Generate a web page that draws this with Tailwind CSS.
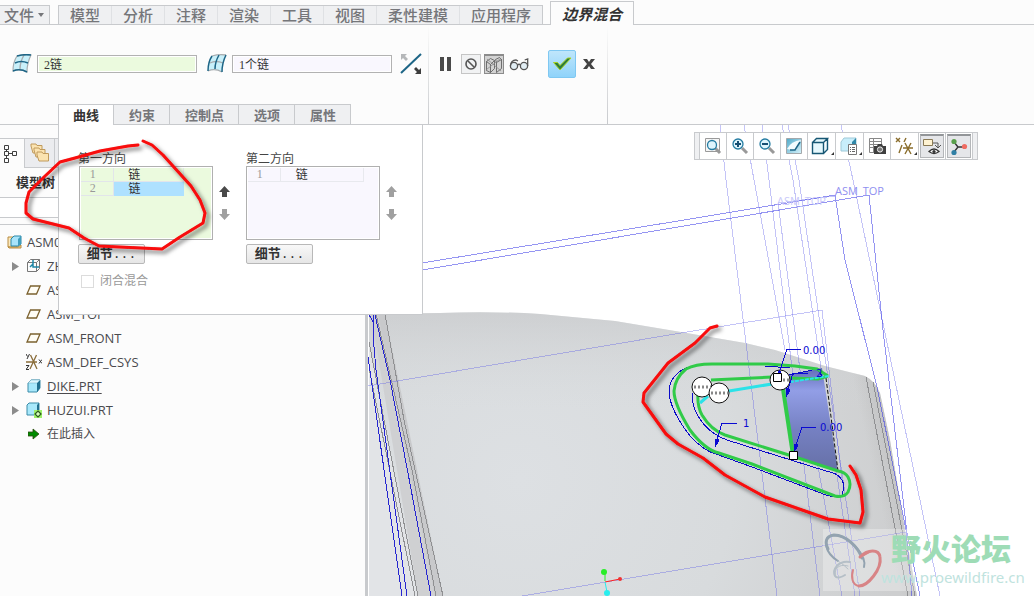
<!DOCTYPE html>
<html lang="zh-CN">
<head>
<meta charset="utf-8">
<meta name="viewport" content="width=device-width, initial-scale=1">
<title>边界混合</title>
<script src="https://cdn.jsdelivr.net/npm/@tailwindcss/browser@4"></script>
</head>
<body class="relative flex min-h-screen flex-col overflow-x-hidden bg-[#fcfcfc] font-['Open_Sans','Noto_Sans_CJK_SC',sans-serif] text-xs text-[#444]">

<!-- Ribbon tabs -->
<nav class="flex h-[25px] shrink-0 items-end border-b border-[#c8cacd] text-[15px] font-medium leading-[18px] text-[#75767a]">
  <button class="-mb-px flex h-5 w-[50px] items-center gap-1 border border-l-0 border-[#c8cacd] bg-[#eff0f2] pl-1">文件
    <svg class="h-1 w-[6px]" viewBox="0 0 6 4"><path d="M0 0h6L3 4z" fill="#75767a"/></svg></button>
  <div class="-mb-px ml-2 flex h-5 divide-x divide-[#dfe1e4] border border-[#c8cacd] bg-[#eff0f2]">
    <button class="px-[11px]">模型</button><button class="px-[11px]">分析</button><button class="px-[11px]">注释</button><button class="px-[11px]">渲染</button><button class="px-[11px]">工具</button><button class="px-[11px]">视图</button><button class="px-[11px]">柔性建模</button><button class="px-[11px]">应用程序</button>
  </div>
  <button class="-mb-px ml-[7px] h-6 border border-b-0 border-[#c8cacd] bg-[#fcfcfc] px-[11px] font-bold italic text-[#333]">边界混合</button>
</nav>

<!-- Dashboard -->
<header class="relative flex h-[100px] shrink-0 border-b border-[#c8cacd]">
  <div class="flex w-[428px] shrink-0 items-start pl-3 pt-[25px]">
    <div class="flex h-7 items-center">
      <svg class="h-5 w-5" viewBox="0 0 20 20"><path d="M5 2Q12 0 19 1Q15 9 15 18Q8 14 1 17Q1 8 5 2z" fill="#c9f0fa" stroke="#a8adb0" stroke-width="1.2"/><path d="M12 1Q8 8 8 15" fill="none" stroke="#a8adb0" stroke-width="1.4"/><path d="M5 2Q12 0 19 1M3 9Q9 6 16 9M1 17Q8 14 15 18" fill="none" stroke="#1d6586" stroke-width="1.5"/></svg>
      <input aria-label="第一方向链" value="2链" class="ml-[5px] h-[18px] w-40 border border-[#b2b2b2] bg-[#ebfade] px-[6px] font-['Liberation_Serif','Noto_Sans_CJK_SC',serif] text-xs text-[#333] outline outline-1 -outline-offset-2 outline-white">
      <svg class="ml-[10px] h-5 w-5" viewBox="0 0 20 20"><path d="M5 2Q12 0 19 1Q15 9 15 18Q8 14 1 17Q1 8 5 2z" fill="#c9f0fa"/><path d="M5 2Q12 0 19 1M3 9Q9 6 16 9M1 17Q8 14 15 18" fill="none" stroke="#a8adb0" stroke-width="1.3"/><path d="M5 2Q1 8 1 17M12 1Q8 8 8 15M19 1Q15 9 15 18" fill="none" stroke="#1d6586" stroke-width="1.5"/></svg>
      <input aria-label="第二方向链" value="1个链" class="ml-[5px] h-[18px] w-40 border border-[#b2b2b2] bg-[#f9f7fe] px-[6px] font-['Liberation_Serif','Noto_Sans_CJK_SC',serif] text-xs text-[#333] outline outline-1 -outline-offset-2 outline-white">
      <button aria-label="反向" class="ml-2"><svg class="h-[22px] w-[22px]" viewBox="0 0 22 22"><path d="M1 20L21 1" stroke="#1d6586" stroke-width="2"/><path d="M1 1h6l-2 2 3 3-2 2-3-3-2 2z" fill="#b5b7b9"/><path d="M21 21h-6l2-2-3-3 2-2 3 3 2-2z" fill="#3d3d3d"/></svg></button>
    </div>
  </div>
  <div class="w-px bg-linear-to-b from-transparent to-[#c8cacd]"></div>
  <div class="flex w-[178px] shrink-0 items-start pl-[11px] pt-[25px]">
    <div class="flex h-7 items-center">
      <button aria-label="暂停"><svg class="h-[14px] w-3" viewBox="0 0 12 14"><path d="M0 0h4v14H0zM7 0h4v14H7z" fill="#4a4a4a"/></svg></button>
      <button aria-label="无预览" class="ml-[9px] flex h-5 w-5 items-center justify-center border border-[#c5c5c5] bg-[#f1f2f3]"><svg class="h-3 w-3" viewBox="0 0 12 12"><circle cx="6" cy="6" r="5" fill="none" stroke="#555" stroke-width="1.6"/><path d="M3 3l6 6" stroke="#555" stroke-width="1.6"/></svg></button>
      <button aria-label="分离" class="ml-[3px] flex h-5 w-5 items-center justify-center border border-t-2 border-[#8c8c8c] bg-[#d3d3d3]"><svg class="h-[18px] w-[18px]" viewBox="0 0 18 18" fill="none" stroke="#555" stroke-width=".8"><path d="M1.500 5.500v9l4 2v-8zM1.500 5.500l4-3 4 2-4 4M5.500 16.500l4-4v-8M11.500 6.500v10l5-4v-9zM11.500 6.500l-1-3 4-2 2 2"/><path d="M1.500 13.500L15.500 2.500M2 3l14 12" stroke="#8a8a8a"/></svg></button>
      <button aria-label="预览" class="ml-[5px]"><svg class="h-[14px] w-[21px]" viewBox="0 0 21 14" fill="none" stroke="#555" stroke-width="1.3"><circle cx="5" cy="9" r="3.6" fill="#e2eef4"/><circle cx="15" cy="9" r="3.6" fill="#e2eef4"/><path d="M8.500 8q1.500-1.500 3 0M1.400 9Q2 3 7 3l2 1M18.700 9V2l-3 1"/></svg></button>
      <button aria-label="确定" class="ml-[18px] flex h-7 w-7 items-center justify-center rounded-xs border border-[#7fc8f2] bg-linear-to-b from-[#bfe6fb] to-[#8fd3fa]"><svg class="h-[14px] w-5" viewBox="0 0 20 14"><path d="M1.500 5.500h4l2.500 3L15.500 1H19L8 13z" fill="#2c7c3c" stroke="#a9d322" stroke-width="1"/></svg></button>
      <button aria-label="取消" class="ml-[7px]"><svg class="h-3 w-3" viewBox="0 0 12 12"><path d="M0 1h4l2 3 2-3h4L8 6l4 5H8L6 8l-2 3H0l4-5z" fill="#444"/></svg></button>
    </div>
  </div>
  <div class="w-px bg-linear-to-b from-transparent to-[#c8cacd]"></div>

  <div class="absolute -bottom-px left-[58px] flex h-[21px] text-[13px] font-bold leading-[18px] text-[#75767a]">
    <button class="border border-b-0 border-[#c8cacd] bg-white px-[14px] text-[#333]">曲线</button>
    <button class="border border-l-0 border-[#c8cacd] bg-[#eff0f2] pl-[15px] pr-[14px]">约束</button>
    <button class="border border-l-0 border-[#c8cacd] bg-[#eff0f2] pl-[15px] pr-[14px]">控制点</button>
    <button class="border border-l-0 border-[#c8cacd] bg-[#eff0f2] pl-[15px] pr-[14px]">选项</button>
    <button class="border border-l-0 border-[#c8cacd] bg-[#eff0f2] pl-[15px] pr-[14px]">属性</button>
  </div>
</header>

<main class="relative flex flex-1">

  <!-- Model tree -->
  <aside class="w-[365px] shrink-0 pt-[13px]">
    <div class="flex h-[30px]">
      <button aria-label="模型树" class="w-6 border-t border-[#c8cacd] pl-[3px]"><svg class="h-5 w-[15px]" viewBox="0 0 15 20" fill="none" stroke="#3f3f3f"><path d="M1.500 1.500h4v4h-4zM1.500 7.500h4v4h-4zM1.500 14.500h4v4h-4zM9.500 7.500h4v4h-4zM3.500 5.500v2M3.500 11.500v3M5.500 9.500h4"/></svg></button>
      <button aria-label="文件夹浏览器" class="flex w-[31px] items-center justify-center border border-[#c8cacd] bg-[#ebecef]"><svg class="h-5 w-5" viewBox="0 0 20 20" fill="#fbe3b0" stroke="#c09a5c"><path d="M1 3V1h5l1 1.500h5V10H3z"/><path d="M4 7V5h5l1 1.500h5V14H6z"/><path d="M7 12V9h5l1 1.500h5.500V18H9z"/></svg></button>
      <div class="flex-1 border-b border-t border-[#c8cacd] bg-[#ebecef]"></div>
    </div>
    <h2 class="pl-4 pt-1 text-[13px] font-bold leading-5 text-[#333]">模型树</h2>
    <input aria-label="搜索" class="mt-[5px] block h-[21px] w-full border border-l-0 border-[#c8cacd] bg-white">
    <div class="mt-[6px] border-t border-[#c8cacd]"></div>
    <ul class="pt-[5px] text-[13px] leading-6 text-[#4a4a4e]">
      <li class="flex h-6 items-center gap-[5px] pl-[7px]"><svg class="h-[15px] w-[15px]" viewBox="0 0 15 15"><path d="M1 2h9v10H1z" fill="#fbe9bd" stroke="#b98c40"/><path d="M1 12h10l3-2v3H2z" fill="#f1d48f" stroke="#b98c40"/><path d="M4 4l3-3h7v8l-3 2H4z" fill="#a8e4fa" stroke="#2a87a8"/><path d="M11 4v7l3-2V1z" fill="#3f9dbd"/></svg>ASM0</li>
      <li class="flex h-6 items-center pl-3"><svg class="h-[9px] w-[7px]" viewBox="0 0 7 9"><path d="M0 0l7 4.500L0 9z" fill="#8c8c8c"/></svg><svg class="ml-2 h-[14px] w-[14px]" viewBox="0 0 14 14" fill="none" stroke="#777"><path d="M.500 3.500h9v9h-9zM.500 3.500l3-3h9l-3 3M12.500.500v9l-3 3"/><path d="M6 1v7h6M6 5L3 8" stroke="#1d86a6" stroke-width="1.500"/></svg><span class="ml-[6px]">ZH</span></li>
      <li class="flex h-6 items-center gap-[6px] pl-[26px]"><svg class="h-[10px] w-[15px]" viewBox="0 0 15 10"><path d="M4.500 1H14L10.500 9H1z" fill="#fffdf5" stroke="#7b612f" stroke-width="1.300"/></svg>AS</li>
      <li class="flex h-6 items-center gap-[6px] pl-[26px]"><svg class="h-[10px] w-[15px]" viewBox="0 0 15 10"><path d="M4.500 1H14L10.500 9H1z" fill="#fffdf5" stroke="#7b612f" stroke-width="1.300"/></svg>ASM_TOP</li>
      <li class="flex h-6 items-center gap-[6px] pl-[26px]"><svg class="h-[10px] w-[15px]" viewBox="0 0 15 10"><path d="M4.500 1H14L10.500 9H1z" fill="#fffdf5" stroke="#7b612f" stroke-width="1.300"/></svg>ASM_FRONT</li>
      <li class="flex h-6 items-center gap-[5px] pl-[26px]"><svg class="h-4 w-4" viewBox="0 0 16 16" fill="none"><path d="M0 8h11M4.500 1L11 15M10.500 1L4 15" stroke="#8a6d3a" stroke-width="1.300"/><path d="M0 0l1.500 2.500M3.500 0L1 5M13 5.500l3 4M16 5.500l-3 4M0 11.500h3L0 15.500h3" stroke="#333"/></svg>ASM_DEF_CSYS</li>
      <li class="flex h-6 items-center pl-3"><svg class="h-[9px] w-[7px]" viewBox="0 0 7 9"><path d="M0 0l7 4.500L0 9z" fill="#8c8c8c"/></svg><svg class="ml-2 h-[14px] w-[14px]" viewBox="0 0 14 14"><path d="M1 4l3-3h9v8l-3 4H1z" fill="#a8e8fb" stroke="#3a8ba8"/><path d="M10 4l3-3v8l-3 4z" fill="#216f8e"/><path d="M1 4l3-3h9l-3 3z" fill="#dff7fe" stroke="#6ca9be" stroke-width=".5"/></svg><a href="#" class="ml-[6px] leading-4 underline underline-offset-2">DIKE.PRT</a></li>
      <li class="flex h-6 items-center pl-3"><svg class="h-[9px] w-[7px]" viewBox="0 0 7 9"><path d="M0 0l7 4.500L0 9z" fill="#8c8c8c"/></svg><svg class="ml-[7px] h-4 w-4" viewBox="0 0 16 16"><path d="M1 3l2-2h10v9l-2 3H1z" fill="#a8e8fb" stroke="#3a8ba8"/><path d="M11 3l2-2v9l-2 2z" fill="#216f8e"/><path d="M8 8h8v8H8z" fill="#9df26a"/><path d="M12 9l3 3-3 3-3-3z" fill="#d8ffc0" stroke="#2c5a1c" stroke-width="1.200"/></svg><span class="ml-[5px]">HUZUI.PRT</span></li>
      <li class="flex h-6 items-center gap-[8px] pl-7 text-xs leading-6"><svg class="h-3 w-[11px]" viewBox="0 0 11 12"><path d="M0 4h5V1l6 5-6 5V8H0z" fill="#008a00" stroke="#2d4a10" stroke-width=".8"/></svg>在此插入</li>
    </ul>
  </aside>
  <div class="w-[3px] shrink-0 bg-[#c8cacd]"></div>

  <!-- Graphics window -->
  <section aria-label="图形窗口" class="relative min-h-[471px] flex-1 overflow-hidden bg-white">
    <svg class="absolute inset-0 h-full w-full" viewBox="368 125 666 471" preserveAspectRatio="xMinYMin slice" fill="none">
      <defs>
        <radialGradient id="body" gradientUnits="userSpaceOnUse" cx="520" cy="480" r="390"><stop offset="0" stop-color="#dde0e3"/><stop offset=".55" stop-color="#d8dbdd"/><stop offset="1" stop-color="#cdcecf"/></radialGradient>
        <linearGradient id="top" x1="0" y1="0" x2="0" y2="1"><stop offset="0" stop-color="#c6c7c9" stop-opacity=".6"/><stop offset="1" stop-color="#d6d9db" stop-opacity="0"/></linearGradient>
        <linearGradient id="edge" gradientUnits="userSpaceOnUse" x1="866" y1="440" x2="898" y2="433"><stop offset="0" stop-color="#bbb" stop-opacity="0"/><stop offset="1" stop-color="#b4b5b7"/></linearGradient>
        <linearGradient id="patch" x1="0" y1="0" x2="0" y2="1"><stop offset="0" stop-color="#626bb8"/><stop offset=".22" stop-color="#929ee6"/><stop offset=".6" stop-color="#7580c2"/><stop offset="1" stop-color="#6670a6"/></linearGradient>
      </defs>
      <path d="M369 314L440 313Q490 311 540 314L615 321 675 331 745 343 775 350 825 366 865 376Q875 381 880 393L890 440 905 530 917 596H369z" fill="url(#body)"/>
      <path d="M369 314L440 313Q490 311 540 314L615 321 675 331 745 343 775 350 825 366 865 376L870 410H369z" fill="url(#top)"/>
      <path d="M850 372L865 376Q875 381 880 393L890 440 905 530 917 596H890z" fill="url(#edge)" opacity=".7"/>
      <path d="M369 342L418 596H369z" fill="#e2e4e7"/>
      <path d="M371 314h12L443 596H418z" fill="#cfd0d2"/>
      <path d="M378 314h7L443 596h-8z" fill="#c8c9cb"/>
      <g stroke="#8f9092" shape-rendering="crispEdges"><path d="M385 314L404 420 443 596M369 342L418 596M376 314L412 470 436 596M369 368L415 596"/><path d="M866 377L908 596M873 382L915 596"/></g>
      <g stroke="#2626d0" shape-rendering="crispEdges"><path d="M368 357L402 596M369 315l5 8M373 315V335L376 370 407 596M375 315L390 380 408 473 431 596"/></g>

      <g stroke="#5555e8" stroke-opacity=".35" shape-rendering="crispEdges">
        <path d="M720 125L726 180 777 596M744 125L785 350M762 125L769 180 820 596M782 125L793 180 855 596M788 125L799 180 860 596M841 125L853 180 940 596M778 203L800 370 842 596M778 203L835 196"/>
        <path d="M368 386L675 334 822 310 842 480M522 596L906 532"/>
      </g>
      <g stroke="#3434e6" stroke-opacity=".52" shape-rendering="crispEdges"><path d="M422 263L690 219 835 195 845 260 877 387 906 530 912 596M422 270L690 225 869 195 883 330 907 533 920 596"/></g>
      <g font-family="Open Sans" font-size="11"><text x="835" y="195" fill="#8f8ff0">ASM_TOP</text><text x="777" y="205" fill="#c9c9fa">ASM_TOP</text></g>

      <path d="M785 376L822 368 838 471 793 456 783 390z" fill="url(#patch)"/>
      <path d="M826 378L838 471" stroke="#111" stroke-dasharray="4 2"/>
      <g stroke="#0a0ac8" shape-rendering="crispEdges"><path d="M688 367Q669 375 669 392 670 410 690 436 704 451 716 454L752 467 826 495Q838 499 842 495 845 485 842 480 838 473 826 471L727 440Q706 432 697 414 691 403 693 393M765 366L790 368M700 364h70M789 375l28-6 5 7"/></g>
      <path d="M828 376L817 369 795 366 768 364H712Q695 364 686 369 675 378 674 391 674 404 690 430 705 450 719 453L752 464 835 496Q844 498 848 492 852 484 848 477 845 472 838 471L792 456 725 435Q711 430 702 415 697 406 698 393M711 380L772 377M790 378L818 379 828 376" stroke="#30cb48" stroke-width="3"/>
      <path d="M783 389L793 455" stroke="#30cb48" stroke-width="4"/>
      <path d="M700 403L708 396M729 391L772 384" stroke="#2be2e8" stroke-width="3"/><path d="M790 382L829 376" stroke="#2be2e8" stroke-width="2" stroke-dasharray="4 1"/>
      <g fill="#fff" stroke="#111"><circle cx="702" cy="387" r="10"/><circle cx="719" cy="393" r="10"/><circle cx="780" cy="380" r="10"/></g>
      <g stroke="#888" stroke-width="3" stroke-dasharray="2 2"><path d="M694 387h17M711 393h17M783 380h8"/></g>
      <g stroke="#0a0ad2" shape-rendering="crispEdges"><path d="M778 376L787 349H801M787 393L793 373H808M716 443L722 423H737M795 448L802 427H816"/><path d="M778 377l1-6 2 1zM786 397l0-9 4 2zM715 447l0-8 4 1zM794 452l1-8 3 1z" fill="#0a0ad2"/></g>
      <g fill="#fff" stroke="#000"><path d="M773.500 373.500h8v8h-8zM789.500 451.500h8v8h-8z"/></g>
      <g font-family="DejaVu Sans" font-size="10" fill="#0a0ad2"><text x="803" y="354">0.00</text><text x="820" y="431">0.00</text><text x="743" y="427">1</text><text x="816" y="377">2</text></g>

      <path d="M605 581V572" stroke="#27ee27"/><path d="M605 582l15-3" stroke="#f22"/><path d="M605 582l2 10" stroke="#27eeee"/>
      <circle cx="604" cy="572" r="3" fill="#27ee27"/><circle cx="620" cy="579" r="2" fill="#e33"/><circle cx="607" cy="593" r="3" fill="#27eeee"/>

      <!-- Forum watermark -->
      <path d="M823 529h84l10 62h-94z" fill="#fff" fill-opacity=".3"/>
      <g stroke-linecap="round">
        <path d="M864 567C867 556 849 535 834 535 821 537 825 553 838 561" stroke="#93a3b0" stroke-width="2"/>
        <path d="M862 558C858 547 846 535 834 535 825 536 825 543 828 549" stroke="#93a3b0" stroke-width="3"/>
        <path d="M850 562C838 560 832 570 835 576 837 579 842 577 845 575" stroke="#b5bfc7" stroke-width="2"/>
        <path d="M836 577C833 570 838 563 848 566M838 561Q843 564 848 569" stroke="#b5bfc7"/>
        <path d="M860 557C868 549 879 549 880 557 882 569 868 586 859 586" stroke="#d88486" stroke-width="3"/>
        <path d="M860 557L871 551M859 586C852 585 851 577 853 570" stroke="#d88486" stroke-width="2"/>
      </g>
      <text x="891" y="560" font-family="Noto Sans CJK SC" font-weight="900" font-size="30" fill="#9edcb6">野火论坛</text>
      <text x="881" y="583" font-family="Noto Sans" font-size="15" fill="#bfe3de">www.proewildfire.cn</text>
    </svg>

    <div class="relative flex justify-end pr-14 pt-[7px]">
      <div class="flex h-7 divide-x divide-[#c8cacd] border border-[#c8cacd] bg-white">
        <div class="w-[5px] bg-[#eff0f2]"></div>
        <button aria-label="重新调整" class="flex w-[27px] items-center justify-center"><svg class="h-[18px] w-[18px]" viewBox="0 0 18 18"><path d="M1.500 1.500h14v13h-14z" fill="#f6f6f6" stroke="#9a9a9a"/><path d="M11 11l5 5" stroke="#999" stroke-width="3"/><circle cx="8" cy="8" r="4.500" fill="#dff5fd" stroke="#247ca2" stroke-width="1.300"/></svg></button>
        <button aria-label="放大" class="flex w-[27px] items-center justify-center"><svg class="h-[18px] w-[18px]" viewBox="0 0 18 18"><path d="M11 11l5 5" stroke="#999" stroke-width="3"/><circle cx="7" cy="7" r="5" fill="#dff5fd" stroke="#247ca2" stroke-width="1.300"/><path d="M4 7h6M7 4v6" stroke="#164f73" stroke-width="2"/></svg></button>
        <button aria-label="缩小" class="flex w-[27px] items-center justify-center"><svg class="h-[18px] w-[18px]" viewBox="0 0 18 18"><path d="M11 11l5 5" stroke="#999" stroke-width="3"/><circle cx="7" cy="7" r="5" fill="#dff5fd" stroke="#247ca2" stroke-width="1.300"/><path d="M4 7h6" stroke="#164f73" stroke-width="2"/></svg></button>
        <button aria-label="重画" class="flex w-[27px] items-center justify-center"><svg class="h-[18px] w-[18px]" viewBox="0 0 18 18"><defs><linearGradient id="sh" x1="0" y1="0" x2="1" y2="1"><stop offset="0" stop-color="#4fa9c8"/><stop offset="1" stop-color="#d9f3fb"/></linearGradient></defs><path d="M1.500 1.500h15v15h-15z" fill="url(#sh)" stroke="#a3a8ab"/><path d="M2 12Q6 4 16 3L11 13H7z" fill="#f2fbfe"/><path d="M5 13h5l5-8" fill="none" stroke="#1d6586" stroke-width="1.500"/></svg></button>
        <button aria-label="显示样式" class="relative flex w-7 items-center justify-center"><svg class="mr-1 h-[18px] w-[18px]" viewBox="0 0 18 18" fill="#e6f8fd" stroke="#175774" stroke-width="1.400"><path d="M1.500 5.500h11v11h-11zM1.500 5.500l4-4h11l-4 4M16.500 1.500v11l-4 4"/></svg><svg class="absolute bottom-1 right-px h-[3px] w-[3px]" viewBox="0 0 4 4"><path d="M4 0v4H0z" fill="#333"/></svg></button>
        <button aria-label="已保存方向" class="relative flex w-7 items-center justify-center"><svg class="mr-px h-[18px] w-[18px]" viewBox="0 0 18 18"><path d="M1 5l3-4h12v8l-3 5H1z" fill="#c8eefb" stroke="#9fc9d8"/><path d="M12 5l4-4v8l-4 4z" fill="#2f88a8"/><path d="M8.500 7.500h8v10h-8z" fill="#fff" stroke="#777"/><path d="M10 10.500h1m1 0h3M10 12.500h1m1 0h3M10 14.500h1m1 0h3" stroke="#666"/></svg><svg class="absolute bottom-1 right-px h-[3px] w-[3px]" viewBox="0 0 4 4"><path d="M4 0v4H0z" fill="#333"/></svg></button>
        <button aria-label="视图管理器" class="flex w-[27px] items-center justify-center"><svg class="h-[18px] w-[18px]" viewBox="0 0 18 18"><path d="M1.500 1.500h12v14h-12zM1.500 4.500h12M1.500 7.500h12M1.500 10.500h12M5.500 1.500v14" fill="#fff" stroke="#888"/><path d="M6 9h3l1-2h4l1 2h3v8H6z" fill="#3f3f3f"/><circle cx="12" cy="12.500" r="2.600" fill="#777" stroke="#eee"/></svg></button>
        <button aria-label="基准显示" class="relative flex w-7 items-center justify-center"><svg class="mr-px h-[18px] w-[18px]" viewBox="0 0 18 18" stroke="#8a6d2c" stroke-width="1.400"><path d="M1 1l4 4M5 1L1 5M11 1L9 5M7 8l-3 8M8 11h10M10 6l6 11M16 6l-6 11"/></svg><svg class="absolute bottom-1 right-px h-[3px] w-[3px]" viewBox="0 0 4 4"><path d="M4 0v4H0z" fill="#333"/></svg></button>
        <button aria-label="注释显示" aria-pressed="true" class="flex w-[27px] items-center justify-center bg-white p-px"><span class="flex h-full w-full items-center justify-center border border-t-2 border-[#b4b6b9] border-t-[#929598] bg-[#e5e6e9]"><svg class="h-[18px] w-[18px]" viewBox="0 0 18 18"><path d="M.500 1.500h9v6h-9z" fill="#fff3d2" stroke="#8a7a55"/><path d="M10 5h5v4M12 7l3 3 3-3" fill="none" stroke="#555"/><path d="M6 13.500q5-5 10 0-5 4-10 0z" fill="#fff" stroke="#333" stroke-width="1.300"/><circle cx="11" cy="13.500" r="1.600" fill="#333"/></svg></span></button>
        <button aria-label="旋转中心" aria-pressed="true" class="flex w-[27px] items-center justify-center bg-white p-px"><span class="flex h-full w-full items-center justify-center border border-t-2 border-[#b4b6b9] border-t-[#929598] bg-[#e5e6e9]"><svg class="h-[18px] w-[18px]" viewBox="0 0 18 18"><path d="M4 4l4 5-4 5M8 9h6" fill="none" stroke="#333" stroke-width="1.400"/><circle cx="4" cy="3.500" r="2.600" fill="#5aa04c"/><circle cx="14.500" cy="8.500" r="2.600" fill="#ee6b62"/><circle cx="4" cy="14.500" r="2.600" fill="#2f7fa5"/></svg></span></button>
        <div class="w-1 bg-[#eff0f2]"></div>
      </div>
    </div>
  </section>

  <!-- Curves slide-down panel -->
  <section aria-label="曲线" class="absolute left-[58px] top-0 h-[190px] w-[365px] border border-t-0 border-[#c8cacd] bg-white pl-[19px] pt-[27px] text-xs">
    <div class="flex">
      <div class="w-[168px]">
        <h3 class="leading-[14px]">第一方向</h3>
        <div class="ml-px flex items-center">
          <div class="h-[74px] w-[134px] border border-[#b0b0b0] bg-[#ebfade] p-px outline outline-1 -outline-offset-2 outline-white">
            <table class="w-[103px] table-fixed border-collapse text-center leading-[13px] text-[#333]">
              <tr><td class="w-8 border-b border-r border-[#e2e5ea] p-0 pr-2 font-['Liberation_Serif',serif] text-[#999]">1</td><td class="border-b border-r border-[#e2e5ea] p-0 pr-7">链</td></tr>
              <tr><td class="border-b border-r border-[#e2e5ea] p-0 pr-2 font-['Liberation_Serif',serif] text-[#999]">2</td><td class="bg-[#aee1ff] p-0 pr-7">链</td></tr>
            </table>
          </div>
          <div class="ml-[6px] flex flex-col gap-3">
            <button aria-label="上移"><svg class="h-[11px] w-[11px]" viewBox="0 0 11 11"><path d="M5.500 0L11 6H8v5H3V6H0z" fill="#4a4a4a"/></svg></button>
            <button aria-label="下移"><svg class="h-[11px] w-[11px]" viewBox="0 0 11 11"><path d="M5.500 11L11 5H8V0H3v5H0z" fill="#a0a0a0"/></svg></button>
          </div>
        </div>
        <button class="mt-1 h-5 w-[67px] rounded-xs border border-[#b8b8b8] bg-linear-to-b from-[#f8f8f8] to-[#e6e6e6] text-[13px] font-bold leading-4 text-[#333]">细节<span class="font-['Liberation_Mono',monospace] font-normal">...</span></button>
      </div>
      <div>
        <h3 class="leading-[14px]">第二方向</h3>
        <div class="flex items-center">
          <div class="h-[74px] w-[134px] border border-[#b0b0b0] bg-[#f9f7fe] p-px outline outline-1 -outline-offset-2 outline-white">
            <table class="w-[116px] table-fixed border-collapse text-center leading-[13px] text-[#333]">
              <tr><td class="w-8 border-b border-r border-[#e8e9ee] p-0 pr-2 font-['Liberation_Serif',serif] text-[#999]">1</td><td class="border-b border-r border-[#e8e9ee] p-0 pr-10">链</td></tr>
            </table>
          </div>
          <div class="ml-[6px] flex flex-col gap-3">
            <button aria-label="上移"><svg class="h-[11px] w-[11px]" viewBox="0 0 11 11"><path d="M5.500 0L11 6H8v5H3V6H0z" fill="#a0a0a0"/></svg></button>
            <button aria-label="下移"><svg class="h-[11px] w-[11px]" viewBox="0 0 11 11"><path d="M5.500 11L11 5H8V0H3v5H0z" fill="#a0a0a0"/></svg></button>
          </div>
        </div>
        <button class="mt-1 h-5 w-[67px] rounded-xs border border-[#b8b8b8] bg-linear-to-b from-[#f8f8f8] to-[#e6e6e6] text-[13px] font-bold leading-4 text-[#333]">细节<span class="font-['Liberation_Mono',monospace] font-normal">...</span></button>
      </div>
    </div>
    <label class="mt-2 flex w-fit items-center gap-[6px] pl-[3px] leading-[18px] text-[#999]"><input type="checkbox" class="h-[13px] w-[13px] appearance-none border border-[#dcdcdc] bg-white">闭合混合</label>
  </section>
</main>

<!-- Hand-drawn markup over the window -->
<svg class="pointer-events-none absolute left-0 top-0 h-[596px] w-[1034px]" viewBox="0 0 1034 596" fill="none">
  <defs><filter id="ink" x="-10%" y="-10%" width="120%" height="120%"><feDropShadow dx="3" dy="3" stdDeviation="2" flood-color="#000" flood-opacity=".55"/></filter></defs>
  <g stroke="#f80808" stroke-width="3" stroke-linecap="round" stroke-linejoin="round" filter="url(#ink)">
    <path d="M138 145L128 146 100 151 75 158 60 162 44 177 29 192 26 203V213L33 219 69 228 84 238 99 246 162 249 180 237 203 223 205 213 200 200 191 186 163 155 152 145 143 141"/>
    <path d="M717 326L710 328 695 343 668 363 644 393 643 402 666 434 678 444 703 458 725 475 765 497 828 519 860 523 863 512 861 490 856 475 850 466"/>
  </g>
</svg>
</body>
</html>
